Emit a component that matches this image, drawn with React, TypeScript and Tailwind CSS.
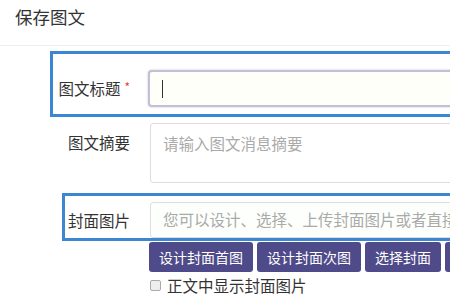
export default function App() {
  return (
    <div className="relative h-[300px] w-[450px] overflow-hidden bg-white font-['Noto_Sans_CJK_SC',sans-serif] text-[#333]">
      {/* Header */}
      <div className="h-[46px] border-b border-[#eee] pl-[15px] pt-[5px] text-[17.5px] leading-[24px]">
        保存图文
      </div>

      {/* Form */}
      <div className="flex flex-col pt-[24px]">
        <div className="flex items-center">
          <div className="w-[130px] shrink-0 text-right text-[15.5px] leading-[20px]">
            图文标题
            <span className="relative -top-[3px] ml-[4px] text-[12px] text-[#e0443a]">*</span>
          </div>
          <div className="ml-[18px] flex h-[37px] w-[320px] shrink-0 items-center rounded-[4px] border-2 border-[#c2bfd6] bg-[#fffffa] pl-[12px] shadow-[0_0_2px_rgba(90,80,150,0.4)]">
            <span className="h-[18px] w-px bg-[#333]" />
          </div>
        </div>

        <div className="mt-[16px] flex items-start">
          <div className="w-[130px] shrink-0 pt-[9px] text-right text-[15.5px] leading-[20px]">图文摘要</div>
          <div className="ml-[20px] h-[60px] w-[320px] shrink-0 rounded-[3px] border border-[#ddd] px-[12px] pt-[9px] text-[15.5px] leading-[20px] text-[#aaa]">
            请输入图文消息摘要
          </div>
        </div>

        <div className="mt-[19px] flex items-center">
          <div className="w-[130px] shrink-0 text-right text-[15.5px] leading-[20px]">封面图片</div>
          <div className="ml-[20px] flex h-[36px] w-[320px] shrink-0 items-center overflow-hidden whitespace-nowrap rounded-[3px] border border-[#ddd] bg-[#fcfffc] pl-[12px] text-[15.5px] text-[#aaa]">
            您可以设计、选择、上传封面图片或者直接输入图片地址
          </div>
        </div>

        <div className="ml-[149px] mt-[4px] flex gap-[4px] whitespace-nowrap">
          {["设计封面首图", "设计封面次图", "选择封面", "上传封面"].map((t) => (
            <div
              key={t}
              className="flex h-[30px] shrink-0 items-center rounded-[3px] bg-[#4f4a8a] px-[10px] text-[14px] text-white"
            >
              {t}
            </div>
          ))}
        </div>

        <div className="ml-[150px] mt-[3px] flex items-center">
          <span className="h-[11px] w-[11px] shrink-0 rounded-[2px] border border-[#aaa] bg-[#eee]" />
          <span className="ml-[6px] text-[15.5px] leading-[20px] text-[#333]">正文中显示封面图片</span>
        </div>
      </div>

      {/* Highlight boxes */}
      <div className="pointer-events-none absolute left-[50px] top-[51px] h-[66px] w-[420px] border-[3px] border-[#3b87d2]" />
      <div className="pointer-events-none absolute left-[62px] top-[193px] h-[48px] w-[410px] border-[3px] border-[#3b87d2]" />
    </div>
  );
}
